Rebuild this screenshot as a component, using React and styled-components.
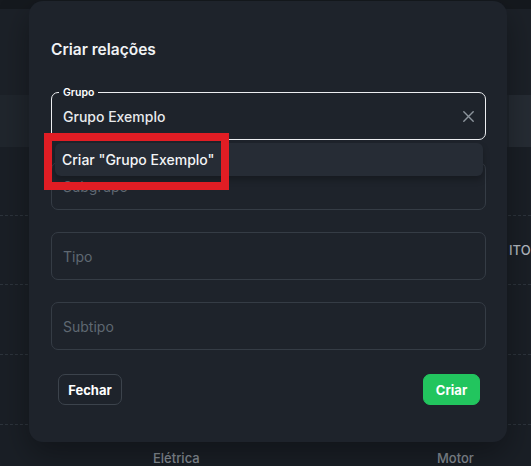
import React from 'react';
import styled, { createGlobalStyle } from 'styled-components';

const Global = createGlobalStyle`
  html, body { margin: 0; padding: 0; background: #1a1f26; }
  body { font-family: Inter, "Noto Sans", sans-serif; -webkit-font-smoothing: antialiased; }
  * { box-sizing: border-box; }
`;

const Page = styled.div`
  position: relative;
  width: 531px;
  height: 466px;
  overflow: hidden;
  background: #1a1f26;
  display: flex;
  flex-direction: column;
`;

const TopBar = styled.div`
  flex: none;
  height: 9px;
  background: #15191e;
`;

const Toolbar = styled.div`
  flex: none;
  height: 86px;
  background: #1c2128;
`;

const HeaderRow = styled.div`
  flex: none;
  height: 52px;
  background: #20262d;
  display: grid;
  grid-template-columns: 509px 1fr;
`;

const HeaderCell = styled.div`
  background: ${(p) => (p.$hl ? '#262c34' : 'transparent')};
`;

const Row = styled.div`
  flex: none;
  height: ${(p) => p.$h}px;
  display: grid;
  grid-template-columns: 153px 284px 72px 1fr;
  align-items: center;
  border-bottom: ${(p) => (p.$last ? 'none' : '1px dashed #2d343c')};
  font-size: 13px;
  font-weight: 500;
  color: #868d95;
  white-space: nowrap;
`;

const Cell = styled.div`
  overflow: hidden;
  color: ${(p) => (p.$bright ? '#b3b9c0' : 'inherit')};
`;

const Dialog = styled.div`
  position: absolute;
  left: 29px;
  top: 1px;
  width: 478px;
  height: 441px;
  background: #1e232b;
  border-radius: 14px;
  box-shadow: 0 12px 32px rgba(0, 0, 0, 0.35);
  padding: 38px 21px 0 22px;
  display: flex;
  flex-direction: column;
`;

const Title = styled.h2`
  margin: 0;
  font-size: 15.5px;
  font-weight: 600;
  line-height: 22px;
  color: #f0f2f4;
`;

const Fields = styled.div`
  margin-top: 31px;
  display: flex;
  flex-direction: column;
  gap: 22px;
`;

const FieldWrap = styled.div`
  position: relative;
`;

const Field = styled.div`
  position: relative;
  height: 48px;
  border: 1px solid ${(p) => (p.$focused ? '#eceef1' : '#353c45')};
  border-radius: 7px;
  display: flex;
  align-items: center;
  padding: 0 11px 0 11px;
  font-size: 14px;
  font-weight: ${(p) => (p.$filled ? 500 : 400)};
  color: ${(p) => (p.$filled ? '#e8eaed' : '#5f6872')};
`;

const FloatLabel = styled.span`
  position: absolute;
  top: -7px;
  left: 7px;
  padding: 0 4px;
  background: #1e232b;
  font-size: 10.5px;
  font-weight: 600;
  line-height: 13px;
  color: #ffffff;
`;

const Clear = styled.span`
  margin-left: auto;
  display: flex;
  align-items: center;
  color: #8c949c;
`;

const Menu = styled.div`
  position: absolute;
  top: 51px;
  left: 4px;
  right: 3px;
  height: 33px;
  z-index: 2;
  background: #262c35;
  border-radius: 6px;
  box-shadow: 0 4px 6px rgba(0, 0, 0, 0.25);
  display: flex;
  align-items: center;
  padding-left: 7px;
  font-size: 14px;
  font-weight: 500;
  color: #f3f4f6;
`;

const Footer = styled.div`
  margin-top: 24px;
  display: flex;
  justify-content: space-between;
  padding: 0 6px 0 7px;
`;

const Button = styled.button`
  height: 31px;
  width: ${(p) => p.$w}px;
  border-radius: 7px;
  border: 1px solid ${(p) => (p.$primary ? '#22c55e' : '#3c434c')};
  background: ${(p) => (p.$primary ? '#22c55e' : 'transparent')};
  color: #ffffff;
  font-family: inherit;
  font-size: 13px;
  font-weight: 700;
  padding: 0;
  cursor: pointer;
`;

const Annotation = styled.div`
  position: absolute;
  left: 44px;
  top: 133px;
  width: 185px;
  height: 57px;
  border: 8px solid #e11d24;
  z-index: 3;
  pointer-events: none;
`;

export default function App() {
  return (
    <>
      <Global />
      <Page>
        <TopBar />
        <Toolbar />
        <HeaderRow>
          <HeaderCell />
          <HeaderCell $hl />
        </HeaderRow>
        <Row $h={69}>
          <Cell />
          <Cell />
          <Cell />
          <Cell />
        </Row>
        <Row $h={69}>
          <Cell />
          <Cell />
          <Cell />
          <Cell $bright>ITO</Cell>
        </Row>
        <Row $h={70}>
          <Cell />
          <Cell />
          <Cell />
          <Cell />
        </Row>
        <Row $h={70}>
          <Cell />
          <Cell />
          <Cell />
          <Cell />
        </Row>
        <Row $h={66} $last>
          <Cell />
          <Cell>Elétrica</Cell>
          <Cell>Motor</Cell>
          <Cell />
        </Row>

        <Dialog>
          <Title>Criar relações</Title>
          <Fields>
            <FieldWrap>
              <Field $focused $filled>
                <FloatLabel>Grupo</FloatLabel>
                Grupo Exemplo
                <Clear>
                  <svg width="11" height="11" viewBox="0 0 11 11" fill="none">
                    <path d="M0.8 0.8 L10.2 10.2 M10.2 0.8 L0.8 10.2" stroke="currentColor" strokeWidth="1.4" strokeLinecap="round" />
                  </svg>
                </Clear>
              </Field>
              <Menu>Criar "Grupo Exemplo"</Menu>
            </FieldWrap>
            <Field>Subgrupo</Field>
            <Field>Tipo</Field>
            <Field>Subtipo</Field>
          </Fields>
          <Footer>
            <Button $w={64}>Fechar</Button>
            <Button $w={57} $primary>Criar</Button>
          </Footer>
        </Dialog>
        <Annotation />
      </Page>
    </>
  );
}
